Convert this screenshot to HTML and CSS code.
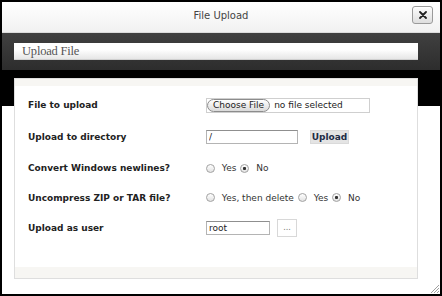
FILE: index.html
```html
<!DOCTYPE html>
<html lang="en">
<head>
    <meta charset="UTF-8">
    <title>File Upload</title>
    <link rel="stylesheet" href="styles.css">
</head>
<body>
    <div class="dialog">
        <div class="titlebar">
            <span></span>
            <span class="title">File Upload</span>
            <button class="close-btn" type="button" title="Close">
                <svg viewBox="0 0 8 8" width="8" height="8"><path d="M1 1L7 7M7 1L1 7" stroke="#222" stroke-width="1.8" stroke-linecap="round"/></svg>
            </button>
        </div>
        <div class="content">
            <div class="section-head">Upload File</div>
            <div class="panel">
                <form class="form">
                    <div class="label">File to upload</div>
                    <div class="field">
                        <div class="file-box">
                            <span class="file-btn">Choose File</span>
                            <span class="file-name">no file selected</span>
                        </div>
                    </div>

                    <div class="label">Upload to directory</div>
                    <div class="field">
                        <input class="text-input dir-input" type="text" value="/">
                        <button class="upload-btn" type="button">Upload</button>
                    </div>

                    <div class="label">Convert Windows newlines?</div>
                    <div class="field radios">
                        <label class="opt"><input type="radio" name="nl"> Yes</label>
                        <label class="opt"><input type="radio" name="nl" checked> No</label>
                    </div>

                    <div class="label">Uncompress ZIP or TAR file?</div>
                    <div class="field radios">
                        <label class="opt"><input type="radio" name="zip"> Yes, then delete</label>
                        <label class="opt"><input type="radio" name="zip"> Yes</label>
                        <label class="opt"><input type="radio" name="zip" checked> No</label>
                    </div>

                    <div class="label">Upload as user</div>
                    <div class="field">
                        <input class="text-input user-input" type="text" value="root">
                        <button class="pick-btn" type="button">...</button>
                    </div>
                </form>
            </div>
        </div>
        <svg class="grip" viewBox="0 0 10 10" width="10" height="10">
            <path d="M9 1L1 9M9 4L4 9M9 7L7 9" stroke="#a0a0a0" stroke-width="1"/>
        </svg>
    </div>
</body>
</html>
```

FILE: styles.css
```css
:root {
    --ui-font: 'DejaVu Sans', Verdana, sans-serif;
    --label-color: #222;
    --text-color: #333;
    --panel-bg: #f7f6f3;
    --panel-border: #dedede;
}
body {
    margin: 0;
    background-color: #000;
    font-family: var(--ui-font);
}
.dialog {
    position: relative;
    width: 442px;
    height: 296px;
    box-sizing: border-box;
    border: 2px solid #000;
    background-color: #fff;
    display: flex;
    flex-direction: column;
}

/* Title bar */
.titlebar {
    display: grid;
    grid-template-columns: 1fr auto 1fr;
    align-items: center;
    height: 30px;
    box-sizing: border-box;
    padding: 4px 7px 8px 7px;
    background: linear-gradient(#fff, #f1f1f1);
    border-bottom: 1px solid #dcdcdc;
    height: 31px;
}
.title {
    font-size: 10px;
    color: #444;
}
.close-btn {
    justify-self: end;
    width: 21px;
    height: 18px;
    padding: 0;
    border: 1px solid #9a9a9a;
    border-radius: 3px;
    background: linear-gradient(#fdfdfd, #dedede);
    box-shadow: inset 0 1px 0 #fff;
    display: flex;
    align-items: center;
    justify-content: center;
}

/* Dark band + panel area */
.content {
    flex: 1;
    padding: 10px 22px 0 12px;
    background: linear-gradient(#404040 0, #2d2d2d 37px, #000 37px, #000 73px, #fff 73px);
}
.section-head {
    height: 17px;
    box-sizing: border-box;
    padding-left: 8px;
    background: linear-gradient(#fff 40%, #e6e6e6);
    border-bottom: 1px solid #cfcfcf;
    font-family: 'Liberation Serif', 'Times New Roman', serif;
    font-size: 12.5px;
    line-height: 17px;
    letter-spacing: -0.2px;
    color: #555;
}
.panel {
    margin-top: 18px;
    border: 1px solid var(--panel-border);
    background-color: var(--panel-bg);
    padding: 7px 0 11px 0;
}
.form {
    margin: 0;
    background-color: #fff;
    height: 181px;
    box-sizing: border-box;
    padding: 3px 0 0 13px;
    display: grid;
    grid-template-columns: 178px 1fr;
    grid-template-rows: 32px 32px 30px 29px 31px;
    align-items: center;
}
.label {
    font-size: 9px;
    font-weight: bold;
    color: var(--label-color);
}
.field {
    display: flex;
    align-items: center;
    font-size: 9px;
    color: var(--text-color);
}

/* Fake file input */
.file-box {
    display: flex;
    align-items: center;
    gap: 4px;
    width: 164px;
    height: 15px;
    box-sizing: border-box;
    border: 1px solid #cfcfcf;
}
.file-btn {
    height: 13px;
    box-sizing: border-box;
    padding: 0 5px;
    border: 1px solid #8c8c8c;
    border-radius: 7px;
    background: linear-gradient(#fff, #dadada);
    line-height: 11px;
    color: #222;
}
.file-name { color: #222; }

.text-input {
    height: 14px;
    box-sizing: border-box;
    padding: 0 2px;
    border: 1px solid #b4b4b4;
    border-top-color: #8f8f8f;
    font-family: var(--ui-font);
    font-size: 9px;
    color: #222;
    outline: none;
}
.dir-input { width: 92px; }
.user-input { width: 64px; }

.upload-btn {
    margin-left: 12px;
    width: 39px;
    height: 14px;
    padding: 0;
    border: 1px solid #dadada;
    background-color: #e4e4e4;
    font-family: var(--ui-font);
    font-size: 9px;
    font-weight: bold;
    color: #1c2b45;
}
.pick-btn {
    margin-left: 7px;
    width: 20px;
    height: 18px;
    padding: 0;
    border: 1px solid #d8d8d8;
    background-color: #fff;
    font-family: var(--ui-font);
    font-size: 8px;
    color: #777;
}

/* Radios */
.radios { gap: 4px; }
.opt {
    display: flex;
    align-items: center;
    white-space: pre;
}
.opt input {
    appearance: none;
    -webkit-appearance: none;
    width: 9px;
    height: 9px;
    margin: 0 4px 0 0;
    border: 1px solid #a2a2a2;
    border-radius: 50%;
    background: linear-gradient(#fff, #e2e2e2);
    box-sizing: border-box;
}
.opt input:checked {
    background: radial-gradient(circle, #333 0 1.3px, transparent 1.8px), linear-gradient(#fff, #e2e2e2);
}

.grip {
    position: absolute;
    right: 0;
    bottom: 0;
}
```
